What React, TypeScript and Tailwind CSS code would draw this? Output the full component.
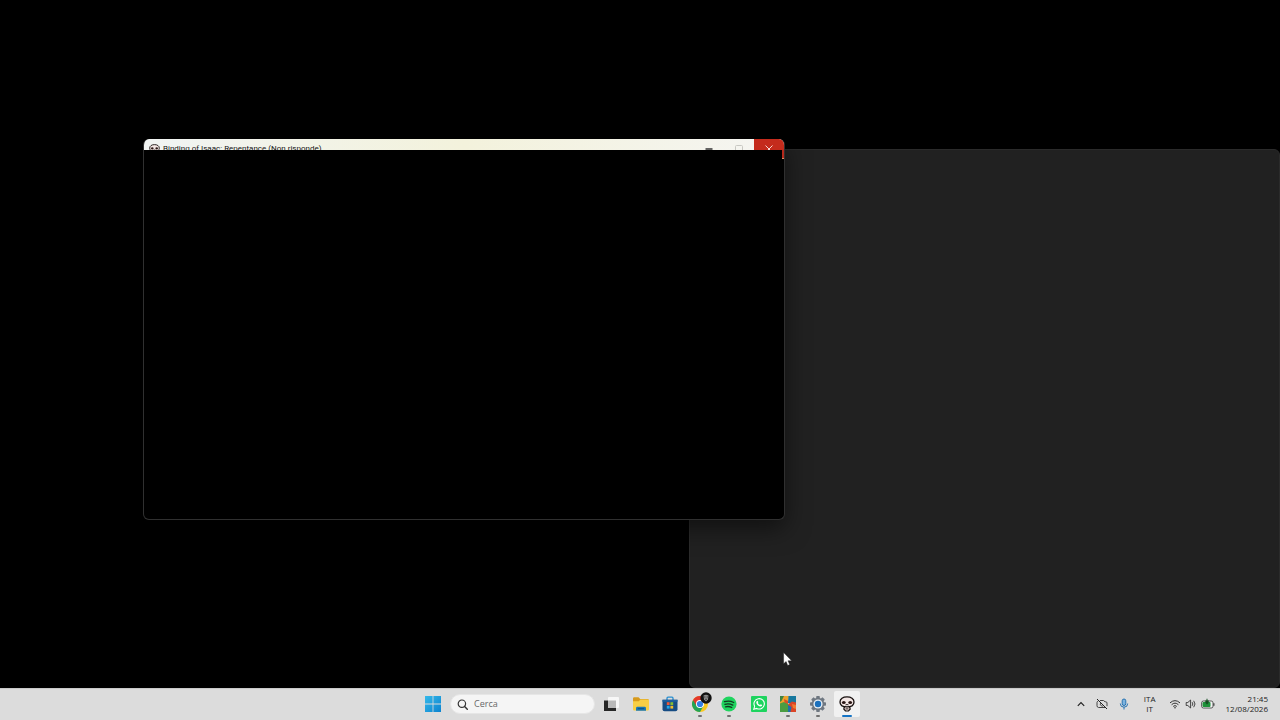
import type { ReactNode } from 'react';

type TaskbarApp = {
  name: string;
  icon: ReactNode;
  running?: boolean;
  active?: boolean;
};

function SkullIcon({ className }: { className: string }) {
  return (
    <svg viewBox="0 0 16 16" className={className} aria-hidden="true">
      <path
        d="M5.500 10.500 4.800 13l1.700 2h3l1.700-2-.7-2.500z"
        fill="#f0dcd9"
        stroke="#17100f"
        strokeWidth="1.200"
      />
      <path
        d="M8 .9C3.900.9 1 2.800 1 6c0 3.100 2.800 4.900 7 4.900S15 9.100 15 6C15 2.800 12.100.9 8 .9Z"
        fill="#f3e6e4"
        stroke="#17100f"
        strokeWidth="1.300"
      />
      <ellipse cx="4.800" cy="6.500" rx="1.900" ry="1.600" fill="#2b1715" />
      <ellipse cx="11.200" cy="6.500" rx="1.900" ry="1.600" fill="#2b1715" />
      <path d="M6.500 8.900q1.500-.8 3 0M6.600 12.900h2.800" fill="none" stroke="#17100f" strokeWidth=".9" />
    </svg>
  );
}

function StartIcon() {
  return (
    <svg viewBox="0 0 16 16" className="size-4" aria-hidden="true">
      <defs>
        <linearGradient id="start-fill" x1="0" y1="0" x2="1" y2="1" gradientUnits="objectBoundingBox">
          <stop offset="0" stopColor="#35b9ea" />
          <stop offset="1" stopColor="#0c83cf" />
        </linearGradient>
      </defs>
      <path d="M0 0h7.600v7.600H0zM8.400 0H16v7.600H8.400zM0 8.400h7.600V16H0zM8.400 8.400H16V16H8.400z" fill="url(#start-fill)" />
    </svg>
  );
}

function TaskViewIcon() {
  return (
    <svg viewBox="0 0 16 16" className="size-4" aria-hidden="true">
      <rect x="5" y="1" width="11" height="11" rx=".8" fill="#f7f7f7" />
      <path d="M1 4.500h4V12h8v3H1z" fill="#262626" />
      <rect x="5" y="4.500" width="8" height="7.500" fill="#b9b9b9" />
    </svg>
  );
}

function FolderIcon() {
  return (
    <svg viewBox="0 0 16 16" className="size-4" aria-hidden="true">
      <path d="M0 2.500Q0 1.300 1.200 1.300h4.300l1.700 1.800h8.300V6H0z" fill="#d79a1c" />
      <path d="M0 5.200h5.800l1.600-1.700h7.400q1.200 0 1.200 1.200v8.700q0 1.100-1.200 1.100H1.200Q0 14.500 0 13.400z" fill="#f8cf45" />
      <path d="M3 14.800v-2.600q0-1.400 1.400-1.400h7.200q1.400 0 1.400 1.400v2.600z" fill="#1b78b4" />
      <path d="M4.800 12.700h6.400" stroke="#0c5187" />
    </svg>
  );
}

function StoreIcon() {
  return (
    <svg viewBox="0 0 16 16" className="size-4" aria-hidden="true">
      <path d="M5 4V2.200q0-1 1-1h4q1 0 1 1V4" fill="none" stroke="#278ed0" strokeWidth="1.300" />
      <path d="M.5 3.800h15v9.400q0 2-2 2h-11q-2 0-2-2z" fill="#174c84" />
      <path d="M.5 3.800h15v2H.5z" fill="#1e5f9e" />
      <path d="M4.800 6.200h2.800V9H4.800z" fill="#ef5837" />
      <path d="M8.400 6.200h2.800V9H8.400z" fill="#84bd34" />
      <path d="M4.800 9.800h2.800v2.800H4.800z" fill="#23a8e8" />
      <path d="M8.400 9.800h2.800v2.800H8.400z" fill="#f5bd2a" />
    </svg>
  );
}

function ChromeIcon() {
  return (
    <span className="relative block size-4">
      <svg viewBox="0 0 16 16" className="size-4" aria-hidden="true">
        <circle cx="8" cy="8" r="8" fill="#f9c81d" />
        <path d="M8 8 1.070 4A8 8 0 0 0 8 16l3.500-6z" fill="#22a455" />
        <path d="M1.070 4A8 8 0 0 1 14.930 4H8v4l-3.460 2z" fill="#e3382c" />
        <circle cx="8" cy="8" r="4" fill="#fff" />
        <circle cx="8" cy="8" r="3.100" fill="#3480e4" />
      </svg>
      <svg viewBox="0 0 12 12" className="absolute -top-1 left-2 size-3" aria-hidden="true">
        <circle cx="6" cy="6" r="5.700" fill="#111" />
        <path d="M3.500 3.500Q6 1.800 8.500 3.500L8 7.500 6 9.600 4 7.500z" fill="#8b8b8b" />
        <path d="M4.200 5h1.200M6.700 5h1.200M5.200 7.300h1.700" stroke="#222" strokeWidth=".8" />
      </svg>
    </span>
  );
}

function SpotifyIcon() {
  return (
    <svg viewBox="0 0 16 16" className="size-4" aria-hidden="true">
      <circle cx="8" cy="8" r="7.600" fill="#1fd45f" />
      <path d="M3.400 5.700q5-1.500 9.300.8M3.900 8.300q4.200-1.200 7.900.8M4.500 10.800q3.400-.9 6.300.7" fill="none" stroke="#123a20" strokeWidth="1.300" strokeLinecap="round" />
    </svg>
  );
}

function WhatsAppIcon() {
  return (
    <svg viewBox="0 0 16 16" className="size-4" aria-hidden="true">
      <rect width="16" height="16" rx="1" fill="#1ed45f" />
      <path d="m2.800 13.200.8-2.900a5.200 5.200 0 1 1 2.100 2.100z" fill="none" stroke="#fff" strokeWidth="1.100" />
      <path d="M5.900 5q.7-.6 1 .2l.4 1-.5.8q.8 1.500 2.200 2l.8-.7 1.400.7q-.1 1.400-1.400 1.500-3.200-.2-4.500-3.500-.2-1.200.6-2z" fill="#fff" />
    </svg>
  );
}

function MosaicIcon() {
  return (
    <svg viewBox="0 0 16 16" className="size-4" aria-hidden="true">
      <path d="M0 0h9l-1 8H0z" fill="#eda32b" />
      <path d="M8.500 0H16v7l-5 1-3-1z" fill="#17789e" />
      <path d="M0 7.500 4 6l4.500 2L8 16H0z" fill="#4a9c42" />
      <path d="m8 8.500 4-3 4 1V16H8z" fill="#db4426" />
      <path d="M0 0h4L1.500 5 0 6z" fill="#3f8442" />
      <path d="m4 3 4 2v3L4.500 6.500z" fill="#d84e28" />
      <path d="m8 9 3.500 2-1 5H8z" fill="#1f6eaa" />
      <path d="m12 8 4 1v4l-3-1z" fill="#f17a30" />
    </svg>
  );
}

function GearIcon() {
  return (
    <svg viewBox="0 0 16 16" className="size-4" aria-hidden="true">
      <g fill="#6f7781">
        <rect x="6.200" width="3.600" height="16" rx=".8" />
        <rect x="6.200" width="3.600" height="16" rx=".8" transform="rotate(45 8 8)" />
        <rect x="6.200" width="3.600" height="16" rx=".8" transform="rotate(90 8 8)" />
        <rect x="6.200" width="3.600" height="16" rx=".8" transform="rotate(135 8 8)" />
        <circle cx="8" cy="8" r="6.200" />
      </g>
      <circle cx="8" cy="8" r="4.600" fill="#e6edf4" />
      <circle cx="8" cy="8" r="3.200" fill="#1b70bd" />
    </svg>
  );
}

const apps: TaskbarApp[] = [
  { name: 'Visualizzazione attività', icon: <TaskViewIcon /> },
  { name: 'Esplora file', icon: <FolderIcon /> },
  { name: 'Microsoft Store', icon: <StoreIcon /> },
  { name: 'Google Chrome', icon: <ChromeIcon />, running: true },
  { name: 'Spotify', icon: <SpotifyIcon />, running: true },
  { name: 'WhatsApp', icon: <WhatsAppIcon /> },
  { name: 'Giochi', icon: <MosaicIcon />, running: true },
  { name: 'Impostazioni', icon: <GearIcon />, running: true },
  { name: 'Binding of Isaac', icon: <SkullIcon className="size-4" />, running: true, active: true },
];

function AppButton({ app }: { app: TaskbarApp }) {
  return (
    <button
      type="button"
      aria-label={app.name}
      className={`relative flex h-[26px] w-[26px] items-center justify-center rounded-xs ${app.active ? 'bg-[#f1f1f1]' : ''}`}
    >
      {app.icon}
      {app.running && (
        <span
          className={`absolute bottom-0 h-[2px] rounded-full ${app.active ? 'w-[10px] bg-[#1473c5]' : 'w-1 bg-[#707070]'}`}
        />
      )}
    </button>
  );
}

function GameWindow() {
  return (
    <section
      aria-label="Binding of Isaac"
      className="absolute top-[139px] left-[143px] h-[381px] w-[642px] overflow-hidden rounded-md border border-t-0 border-[#303030] bg-black shadow-[0_8px_24px_rgba(0,0,0,0.5)]"
    >
      {/* the unresponsive content is painted over the lower half of the title bar */}
      <header className="h-[11px] overflow-hidden bg-linear-to-r from-[#f1f4f3] via-[#f3f2dc] to-[#f5f5f2]">
        <div className="flex h-5 items-center pl-[5px]">
          <SkullIcon className="mr-[3px] size-[11px]" />
          <h1 className="grow font-['Roboto','Open_Sans',sans-serif] text-[8px] leading-3 whitespace-nowrap text-[#151515]">
            Binding of Isaac: Repentance (Non risponde)
          </h1>
          <button type="button" aria-label="Riduci a icona" className="flex h-5 w-[30px] items-center justify-center">
            <svg viewBox="0 0 8 8" className="size-2" aria-hidden="true">
              <path d="M.5 4h7" stroke="#333" strokeWidth="1.500" />
            </svg>
          </button>
          <button type="button" aria-label="Ingrandisci" className="flex h-5 w-[30px] items-center justify-center">
            <svg viewBox="0 0 8 8" className="size-2" aria-hidden="true">
              <rect x=".5" y=".5" width="7" height="7" rx="1" fill="none" stroke="#c8c8c2" />
            </svg>
          </button>
          <button type="button" aria-label="Chiudi" className="flex h-5 w-[30px] items-center justify-center bg-[#c42b1c]">
            <svg viewBox="0 0 8 8" className="size-2" aria-hidden="true">
              <path d="m.5.5 7 7m0-7-7 7" stroke="#f5d5d0" />
            </svg>
          </button>
        </div>
      </header>
      <div className="ml-auto h-[9px] w-[2px] border-b border-[#e08a60] bg-[#b5291c]" />
    </section>
  );
}

function Tray() {
  return (
    <div className="flex items-center justify-end pr-3 text-[8px] leading-[10px] text-[#222]">
      <button type="button" aria-label="Mostra icone nascoste" className="mr-[11px]">
        <svg viewBox="0 0 8 8" className="size-2" fill="none" stroke="#222" aria-hidden="true">
          <path d="m.8 5.800 3.200-3.200 3.200 3.200" strokeWidth="1.200" />
        </svg>
      </button>
      <button type="button" aria-label="Fotocamera disattivata" className="mr-[11px]">
        <svg viewBox="0 0 12 12" className="size-3" fill="none" stroke="#444" aria-hidden="true">
          <path d="M4 2.500h3.500L9 3.800h.8q1.200 0 1.200 1.200v3.200M9.300 9.500H2.600Q1 9.300 1 7.800V4.500q0-1 1-1.300M4.500 5.200q-.6 1.800.8 2.600t2.400-.3" />
          <path d="m1 1 10 10" stroke="#222" />
        </svg>
      </button>
      <button type="button" aria-label="Microfono in uso" className="mr-[15px]">
        <svg viewBox="0 0 10 12" className="h-3 w-[10px]" fill="none" stroke="#2773b2" aria-hidden="true">
          <rect x="3.200" y="1" width="3.600" height="6.500" rx="1.800" fill="#7db3de" />
          <path d="M1.300 5.500q0 3.700 3.700 3.700t3.700-3.700M5 9.200V11.500" />
        </svg>
      </button>
      <button type="button" aria-label="Lingua" className="mr-[13px] text-center">
        <span className="block">ITA</span>
        <span className="block">IT</span>
      </button>
      <button type="button" aria-label="Rete, volume e batteria" className="mr-[11px] flex items-center gap-1">
        <svg viewBox="0 0 12 12" className="size-3" fill="none" stroke="#333" aria-hidden="true">
          <path d="M1 4.900q5-4.500 10 0M2.600 6.700q3.400-3.100 6.800 0M4.200 8.400q1.800-1.600 3.600 0" />
          <circle cx="6" cy="9.800" r=".8" fill="#333" stroke="none" />
        </svg>
        <svg viewBox="0 0 12 12" className="size-3" fill="none" stroke="#333" strokeWidth=".9" aria-hidden="true">
          <path d="M1.200 4.500h1.600L5.600 2v8L2.800 7.500H1.200zM7.200 4.200q1.300 1.800 0 3.600M8.700 2.800q2.600 3.200 0 6.400" />
        </svg>
        <svg viewBox="0 0 14 12" className="h-3 w-[14px]" aria-hidden="true">
          <rect x=".6" y="3" width="11.400" height="7" rx="1.800" fill="#f3f3f3" stroke="#333" strokeWidth=".8" />
          <rect x="1.500" y="3.900" width="8" height="5.200" rx="1" fill="#1d9139" />
          <path d="M12.900 5.200v2.600" stroke="#333" strokeWidth="1.100" />
          <path d="M5.500.8h1v1.700h1.400L7.500 5 6 6.500 4.500 5l-.3-2.500h1.300z" fill="#164f22" />
        </svg>
      </button>
      <button type="button" aria-label="Data e ora" className="text-right">
        <time className="block">21:45</time>
        <time className="block">12/08/2026</time>
      </button>
    </div>
  );
}

function Taskbar() {
  return (
    <footer className="grid h-8 grid-cols-[1fr_auto_1fr] items-center border-t border-[#c9c9c9] bg-[#dcdcdc] pb-px">
      <div />
      <nav aria-label="Barra delle applicazioni" className="flex items-center">
        <button type="button" aria-label="Start" className="mr-1 flex h-[26px] w-[26px] items-center justify-center">
          <StartIcon />
        </button>
        <label className="mr-[3px] flex h-5 w-[145px] items-center gap-[6px] rounded-full border border-[#e6e6e6] bg-[#f5f5f5] px-[6px]">
          <svg viewBox="0 0 11 11" className="size-[11px] shrink-0" fill="none" stroke="#333" aria-hidden="true">
            <circle cx="4.900" cy="4.700" r="3.700" strokeWidth="1.200" />
            <path d="m7.600 7.400 2.700 2.800" strokeWidth="1.400" strokeLinecap="round" />
          </svg>
          <input
            type="search"
            aria-label="Cerca"
            placeholder="Cerca"
            className="w-full bg-transparent text-[9px] leading-4 outline-none placeholder:text-[#686868]"
          />
        </label>
        <div className="flex w-[262px] justify-between">
          {apps.map((app) => (
            <AppButton key={app.name} app={app} />
          ))}
        </div>
      </nav>
      <Tray />
    </footer>
  );
}

export default function App() {
  return (
    <div className="flex h-screen flex-col overflow-hidden bg-black font-['Open_Sans','Noto_Sans',sans-serif]">
      <main className="relative grow overflow-hidden">
        <section
          aria-label="Finestra in background"
          className="absolute top-[149px] right-0 bottom-0 left-[689px] rounded-md border border-[#2b2b2b] bg-[#212121]"
        />
        <GameWindow />
        <svg viewBox="0 0 9 14" className="absolute top-[652px] left-[783px] h-[14px] w-[9px]" aria-hidden="true">
          <path d="M.6.500v11.300L3.100 9.500l1.600 4 2-.9L5 8.800h3.700z" fill="#fff" stroke="#111" strokeWidth=".4" />
        </svg>
      </main>
      <Taskbar />
    </div>
  );
}
